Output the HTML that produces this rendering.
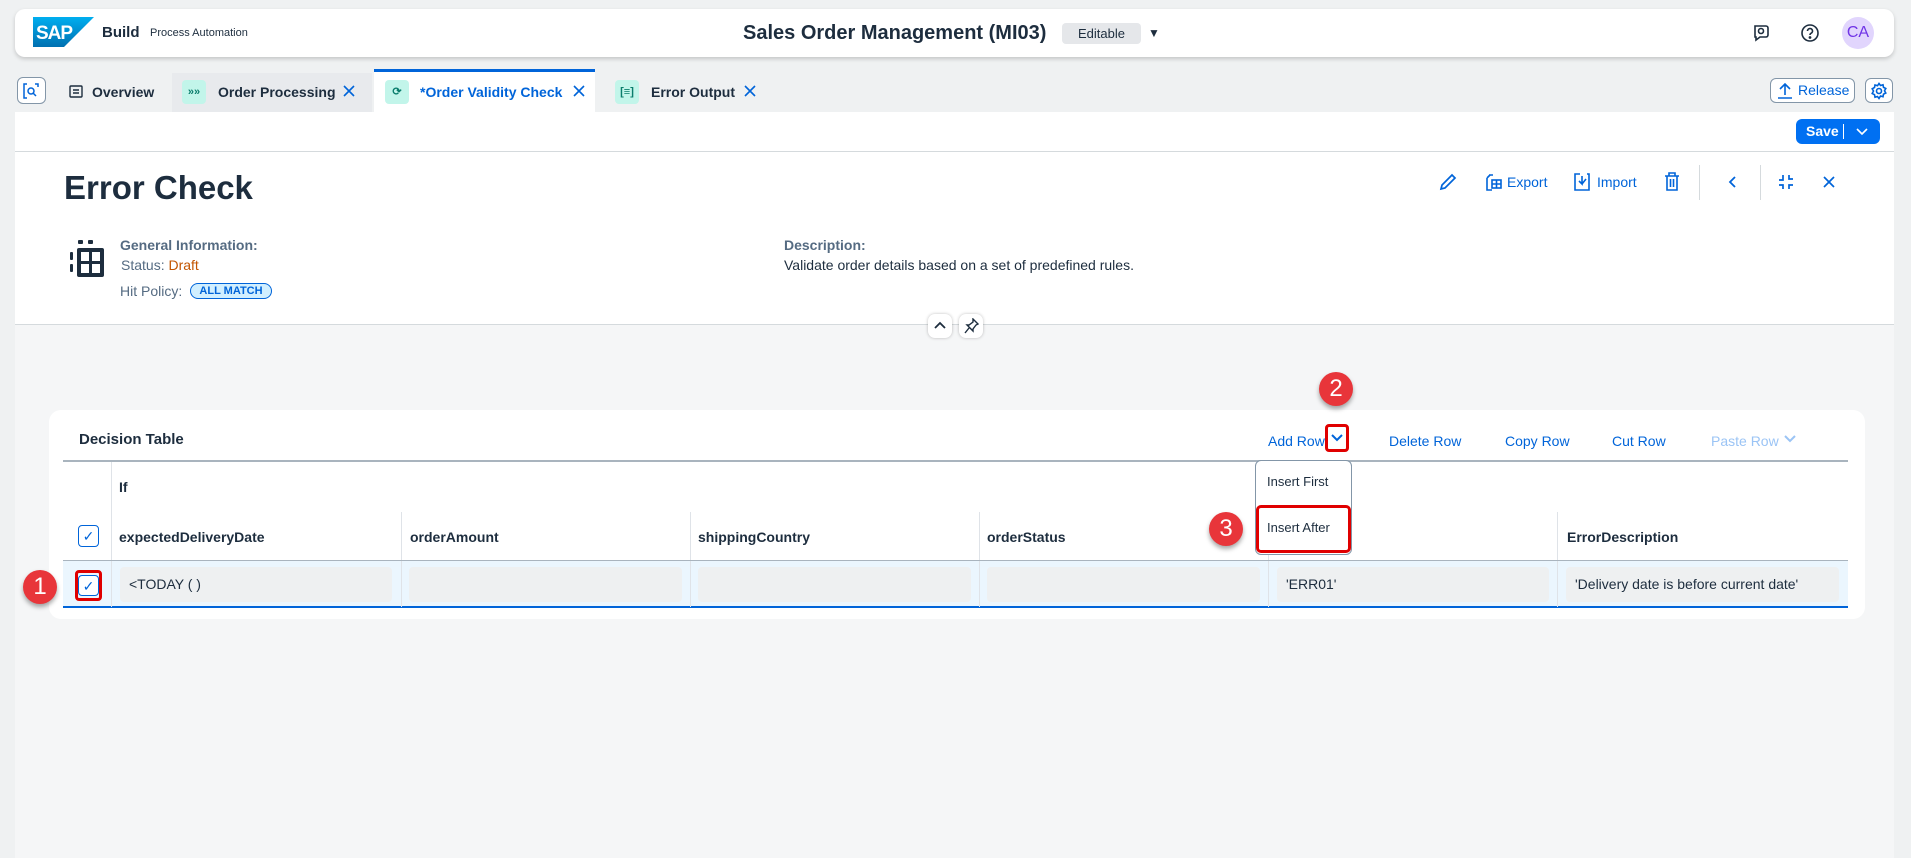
<!DOCTYPE html>
<html><head><meta charset="utf-8"><style>
*{box-sizing:border-box;margin:0;padding:0}
body{width:1911px;height:858px;overflow:hidden;background:#eff1f2;font-family:"Liberation Sans",Arial,sans-serif;color:#1d2d3e;position:relative}
.a{position:absolute}
.blue{color:#0064d9}
.hdr{left:15px;top:9px;width:1879px;height:48px;background:#fff;border-radius:10px;box-shadow:0 2px 4px rgba(0,0,0,.18)}
.tabtxt{font-size:14px;font-weight:bold;top:84px}
.ticon{width:24px;height:24px;background:#c2f5ea;border-radius:4px;top:80px;color:#0a7d6c;font-size:11px;text-align:center;line-height:24px;font-weight:bold}
.card{background:#fff}
.lbl{font-size:13px;color:#556b82}
.tb{font-size:14px;color:#0064d9;top:433px}
.th{font-size:14px;font-weight:bold;top:529px}
.cell{top:567px;height:35px;background:#eef0f1;border-radius:4px;font-size:14px;line-height:35px;padding-left:9px;color:#1d2d3e}
.vl{width:1px;background:#dfe3e8}
.badge{width:34px;height:34px;border-radius:50%;background:#e8353a;color:#fff;font-size:24px;text-align:center;line-height:34px;box-shadow:0 3px 5px rgba(0,0,0,.35)}
.cb{width:21px;height:22px;border:1px solid #0064d9;border-radius:4px;background:#fff;color:#0064d9;font-size:14px;text-align:center;line-height:20px}
</style></head><body>
<svg width="0" height="0" style="position:absolute"><defs><symbol id="x" viewBox="0 0 12 12"><path d="M1 1l10 10M11 1L1 11" stroke="#0064d9" stroke-width="1.6" fill="none"/></symbol></defs></svg>
<!-- header -->
<div class="a hdr"></div>
<svg class="a" style="left:33px;top:17px" width="61" height="30" viewBox="0 0 61 30"><defs><linearGradient id="g" x1="0" y1="0" x2="0" y2="1"><stop offset="0" stop-color="#00aeef"/><stop offset="1" stop-color="#0070b1"/></linearGradient></defs><polygon points="0,0 61,0 31,30 0,30" fill="url(#g)"/><text x="3" y="22" font-family="Liberation Sans" font-weight="bold" font-size="19" fill="#fff" letter-spacing="-1">SAP</text></svg>
<div class="a" style="left:102px;top:24px;font-size:15px;font-weight:bold">Build</div>
<div class="a" style="left:150px;top:27px;font-size:11px">Process Automation</div>
<div class="a" style="left:743px;top:22px;font-size:20px;font-weight:bold">Sales Order Management (MI03)</div>
<div class="a" style="left:1062px;top:23px;width:79px;height:21px;background:#e5e7ea;border-radius:4px;font-size:13px;text-align:center;line-height:21px">Editable</div>
<div class="a" style="left:1148px;top:26px;font-size:12px">▼</div>
<svg class="a" style="left:1751px;top:23px" width="20" height="20" viewBox="0 0 20 20" fill="none" stroke="#1d2d3e" stroke-width="1.6"><path d="M4 3h11a2 2 0 0 1 2 2v7a2 2 0 0 1-2 2H9l-4 3v-3H4z"/><circle cx="10" cy="8" r="2.5"/></svg>
<svg class="a" style="left:1800px;top:23px" width="20" height="20" viewBox="0 0 20 20" fill="none" stroke="#1d2d3e" stroke-width="1.6"><circle cx="10" cy="10" r="8"/><path d="M7.5 8a2.5 2.5 0 1 1 3.5 2.3c-.8.4-1 .9-1 1.7"/><circle cx="10" cy="14.5" r=".6" fill="#1d2d3e"/></svg>
<div class="a" style="left:1842px;top:17px;width:32px;height:32px;border-radius:50%;background:#e1d5fd;color:#7034e6;font-size:16px;text-align:center;line-height:32px">CA</div>
<!-- tabs -->
<div class="a" style="left:17px;top:77px;width:29px;height:27px;border:1px solid #8396a8;border-radius:6px;background:#fff"></div>
<svg class="a" style="left:23px;top:83px" width="16" height="16" viewBox="0 0 16 16" fill="none" stroke="#0064d9" stroke-width="1.5"><path d="M4 1H1v14h3M12 1h3v3"/><circle cx="8" cy="8" r="3"/><path d="M10 10l3 3"/></svg>
<svg class="a" style="left:69px;top:85px" width="14" height="13" viewBox="0 0 14 13" fill="none" stroke="#1d2d3e" stroke-width="1.4"><rect x="1" y="1" width="12" height="11" rx="1"/><path d="M4 5h6M4 8h6"/></svg>
<div class="a tabtxt" style="left:92px">Overview</div>
<div class="a" style="left:172px;top:73px;width:200px;height:39px;background:#e8eaed"></div>
<div class="a ticon" style="left:182px">»»</div>
<div class="a tabtxt" style="left:218px">Order Processing</div>
<svg class="a" style="left:343px;top:85px" width="12" height="12"><use href="#x"/></svg>
<div class="a" style="left:374px;top:69px;width:221px;height:43px;background:#fff;border-top:3px solid #0064d9"></div>
<div class="a ticon" style="left:385px">⟳</div>
<div class="a tabtxt blue" style="left:420px">*Order Validity Check</div>
<svg class="a" style="left:573px;top:85px" width="12" height="12"><use href="#x"/></svg>
<div class="a ticon" style="left:615px">[≡]</div>
<div class="a tabtxt" style="left:651px">Error Output</div>
<svg class="a" style="left:744px;top:85px" width="12" height="12"><use href="#x"/></svg>
<div class="a" style="left:1770px;top:78px;width:85px;height:25px;border:1px solid #8396a8;border-radius:6px;background:#fff;color:#0064d9;font-size:14px;line-height:23px;padding-left:27px">Release</div>
<svg class="a" style="left:1777px;top:82px" width="16" height="17" viewBox="0 0 16 17" fill="none" stroke="#0064d9" stroke-width="1.6"><path d="M8 13V2M3 7l5-5 5 5M1 16h14"/></svg>
<div class="a" style="left:1865px;top:78px;width:28px;height:25px;border:1px solid #8396a8;border-radius:6px;background:#fff"></div>
<svg class="a" style="left:1870px;top:82px" width="18" height="18" viewBox="0 0 18 18" fill="none" stroke="#0064d9" stroke-width="1.6"><circle cx="9" cy="9" r="2.5"/><path d="M9 1.5l1.5 2 2.5-.7.5 2.5 2.3 1.2-1.3 2.3 1.3 2.2-2.3 1.2-.5 2.5-2.5-.7L9 16.5 7.5 14.5 5 15.2 4.5 12.7 2.2 11.5 3.5 9 2.2 6.8 4.5 5.5 5 3 7.5 3.7z"/></svg>
<!-- main card -->
<div class="a" style="left:15px;top:112px;width:1879px;height:746px;background:#f5f6f7"></div>
<div class="a card" style="left:15px;top:112px;width:1879px;height:213px;border-bottom:1px solid #d5dadd"></div>
<div class="a" style="left:15px;top:151px;width:1879px;height:1px;background:#d5dadd"></div>
<div class="a" style="left:1796px;top:119px;width:84px;height:25px;background:#0070f2;border-radius:6px;color:#fff;font-size:14px;font-weight:bold;line-height:25px;padding-left:10px">Save</div>
<div class="a" style="left:1843px;top:124px;width:1px;height:15px;background:#fff"></div>
<svg class="a" style="left:1856px;top:127px" width="12" height="9" viewBox="0 0 12 9" fill="none" stroke="#fff" stroke-width="1.6"><path d="M1 2l5 5 5-5"/></svg>
<div class="a" style="left:64px;top:169px;font-size:33px;font-weight:bold">Error Check</div>
<!-- actions -->
<svg class="a" style="left:1439px;top:173px" width="18" height="18" viewBox="0 0 18 18" fill="none" stroke="#0064d9" stroke-width="1.7"><path d="M2 16l1-4L13 2l3 3L6 15z"/></svg>
<svg class="a" style="left:1484px;top:172px" width="18" height="20" viewBox="0 0 18 20" fill="none" stroke="#0064d9" stroke-width="1.6"><path d="M5 3h4M3 6v12h5M3 6l3-3"/><rect x="8" y="8" width="9" height="8"/><path d="M12.5 8v8M8 12h9"/></svg>
<div class="a blue" style="left:1507px;top:174px;font-size:14px">Export</div>
<svg class="a" style="left:1573px;top:172px" width="18" height="20" viewBox="0 0 18 20" fill="none" stroke="#0064d9" stroke-width="1.6"><path d="M7 2H2v16h14V2h-2M9 4v8l-3-3M9 12l4-5"/></svg>
<div class="a blue" style="left:1597px;top:174px;font-size:14px">Import</div>
<svg class="a" style="left:1664px;top:172px" width="16" height="19" viewBox="0 0 16 19" fill="none" stroke="#0064d9" stroke-width="1.6"><path d="M1 4h14M5 4V1h6v3M3 4v14h10V4M6.5 7v8M9.5 7v8"/></svg>
<div class="a" style="left:1699px;top:165px;width:1px;height:35px;background:#d5dadd"></div>
<svg class="a" style="left:1728px;top:175px" width="10" height="14" viewBox="0 0 10 14" fill="none" stroke="#0064d9" stroke-width="1.8"><path d="M7 2L2 7l5 5"/></svg>
<div class="a" style="left:1760px;top:165px;width:1px;height:35px;background:#d5dadd"></div>
<svg class="a" style="left:1778px;top:174px" width="16" height="16" viewBox="0 0 16 16" fill="none" stroke="#0064d9" stroke-width="1.7"><path d="M1 6h4V1M11 1v4h4M15 11h-4v4M5 15v-4H1"/></svg>
<svg class="a" style="left:1822px;top:175px" width="14" height="14" viewBox="0 0 14 14" fill="none" stroke="#0064d9" stroke-width="1.7"><path d="M2 2l10 10M12 2L2 12"/></svg>
<!-- info -->
<svg class="a" style="left:69px;top:239px" width="38" height="40" viewBox="0 0 38 40"><rect x="9" y="1" width="5" height="4" rx="1" fill="#1d2d3e"/><rect x="19" y="1" width="5" height="4" rx="1" fill="#1d2d3e"/><rect x="1" y="13" width="3" height="8" rx="1" fill="#1d2d3e"/><rect x="1" y="25" width="3" height="8" rx="1" fill="#1d2d3e"/><rect x="8" y="9" width="27" height="29" rx="2" fill="#1d2d3e"/><rect x="12" y="13" width="8" height="9" fill="#fff"/><rect x="23" y="13" width="8" height="9" fill="#fff"/><rect x="12" y="25" width="8" height="9" fill="#fff"/><rect x="23" y="25" width="8" height="9" fill="#fff"/></svg>
<div class="a lbl" style="left:120px;top:237px;font-weight:bold;font-size:14px">General Information:</div>
<div class="a lbl" style="left:121px;top:257px;font-size:14px">Status: <span style="color:#c35500">Draft</span></div>
<div class="a lbl" style="left:120px;top:283px;font-size:14px">Hit Policy:</div>
<div class="a" style="left:190px;top:283px;width:82px;height:16px;border:1px solid #0064d9;border-radius:9px;background:#d1efff;color:#0064d9;font-size:11px;font-weight:bold;text-align:center;line-height:14px">ALL MATCH</div>
<div class="a lbl" style="left:784px;top:237px;font-weight:bold;font-size:14px">Description:</div>
<div class="a" style="left:784px;top:257px;font-size:14px">Validate order details based on a set of predefined rules.</div>
<div class="a" style="left:928px;top:314px;width:24px;height:24px;border-radius:7px;background:#fff;box-shadow:0 0 3px rgba(0,0,0,.25)"></div>
<svg class="a" style="left:934px;top:321px" width="12" height="9" viewBox="0 0 12 9" fill="none" stroke="#1d2d3e" stroke-width="1.8"><path d="M1 7l5-5 5 5"/></svg>
<div class="a" style="left:959px;top:314px;width:24px;height:24px;border-radius:7px;background:#fff;box-shadow:0 0 3px rgba(0,0,0,.25)"></div>
<svg class="a" style="left:964px;top:318px" width="15" height="16" viewBox="0 0 15 16" fill="none" stroke="#1d2d3e" stroke-width="1.4"><path d="M9 1l5 5-2 1-3 4 0 2-6-6 2 0 4-3zM5 10l-4 5"/></svg>
<!-- decision table card -->
<div class="a card" style="left:49px;top:410px;width:1816px;height:209px;border-radius:12px"></div>
<div class="a" style="left:79px;top:431px;font-size:15px;font-weight:bold">Decision Table</div>
<div class="a tb" style="left:1268px">Add Row</div>
<div class="a" style="left:1325px;top:424px;width:24px;height:28px;border:3px solid #e00000;border-radius:4px"></div>
<svg class="a" style="left:1331px;top:434px" width="12" height="8" viewBox="0 0 12 8" fill="none" stroke="#0064d9" stroke-width="2"><path d="M1 1l5 5 5-5"/></svg>
<div class="a tb" style="left:1389px">Delete Row</div>
<div class="a tb" style="left:1505px">Copy Row</div>
<div class="a tb" style="left:1612px">Cut Row</div>
<div class="a tb" style="left:1711px;color:#9bc4f5">Paste Row</div>
<svg class="a" style="left:1784px;top:435px" width="12" height="8" viewBox="0 0 12 8" fill="none" stroke="#9bc4f5" stroke-width="2"><path d="M1 1l5 5 5-5"/></svg>
<div class="a" style="left:63px;top:460px;width:1785px;height:2px;background:#a9b4be"></div>
<div class="a vl" style="left:111px;top:462px;height:146px"></div>
<div class="a" style="left:119px;top:479px;font-size:14px;font-weight:bold">If</div>
<div class="a vl" style="left:401px;top:512px;height:96px"></div>
<div class="a vl" style="left:690px;top:512px;height:96px"></div>
<div class="a vl" style="left:979px;top:512px;height:96px"></div>
<div class="a vl" style="left:1268px;top:512px;height:96px"></div>
<div class="a vl" style="left:1557px;top:512px;height:96px"></div>
<div class="a cb" style="left:78px;top:525px">✓</div>
<div class="a th" style="left:119px">expectedDeliveryDate</div>
<div class="a th" style="left:410px">orderAmount</div>
<div class="a th" style="left:698px">shippingCountry</div>
<div class="a th" style="left:987px">orderStatus</div>
<div class="a th" style="left:1567px">ErrorDescription</div>
<div class="a" style="left:63px;top:560px;width:1785px;height:48px;background:#ebf6fe;border-top:1px solid #a9b4be;border-bottom:2px solid #0064d9"></div>
<div class="a vl" style="left:111px;top:561px;height:46px"></div>
<div class="a vl" style="left:401px;top:561px;height:46px"></div>
<div class="a vl" style="left:690px;top:561px;height:46px"></div>
<div class="a vl" style="left:979px;top:561px;height:46px"></div>
<div class="a vl" style="left:1268px;top:561px;height:46px"></div>
<div class="a vl" style="left:1557px;top:561px;height:46px"></div>
<div class="a cell" style="left:120px;width:272px">&lt;TODAY ( )</div>
<div class="a cell" style="left:409px;width:273px"></div>
<div class="a cell" style="left:698px;width:273px"></div>
<div class="a cell" style="left:987px;width:273px"></div>
<div class="a cell" style="left:1277px;width:272px">'ERR01'</div>
<div class="a cell" style="left:1566px;width:273px">'Delivery date is before current date'</div>
<div class="a" style="left:75px;top:570px;width:27px;height:31px;border:3px solid #e00000;border-radius:4px"></div>
<div class="a cb" style="left:78px;top:575px;height:21px">✓</div>
<!-- dropdown -->
<div class="a" style="left:1255px;top:460px;width:97px;height:95px;background:#fff;border:1px solid #8396a8;border-radius:6px"></div>
<div class="a" style="left:1267px;top:474px;font-size:13px;color:#1d2d3e">Insert First</div>
<div class="a" style="left:1256px;top:505px;width:95px;height:48px;border:3px solid #e00000;border-radius:5px"></div>
<div class="a" style="left:1267px;top:520px;font-size:13px;color:#1d2d3e">Insert After</div>
<!-- badges -->
<div class="a badge" style="left:23px;top:570px">1</div>
<div class="a badge" style="left:1319px;top:372px">2</div>
<div class="a badge" style="left:1209px;top:512px">3</div>
</body></html>
